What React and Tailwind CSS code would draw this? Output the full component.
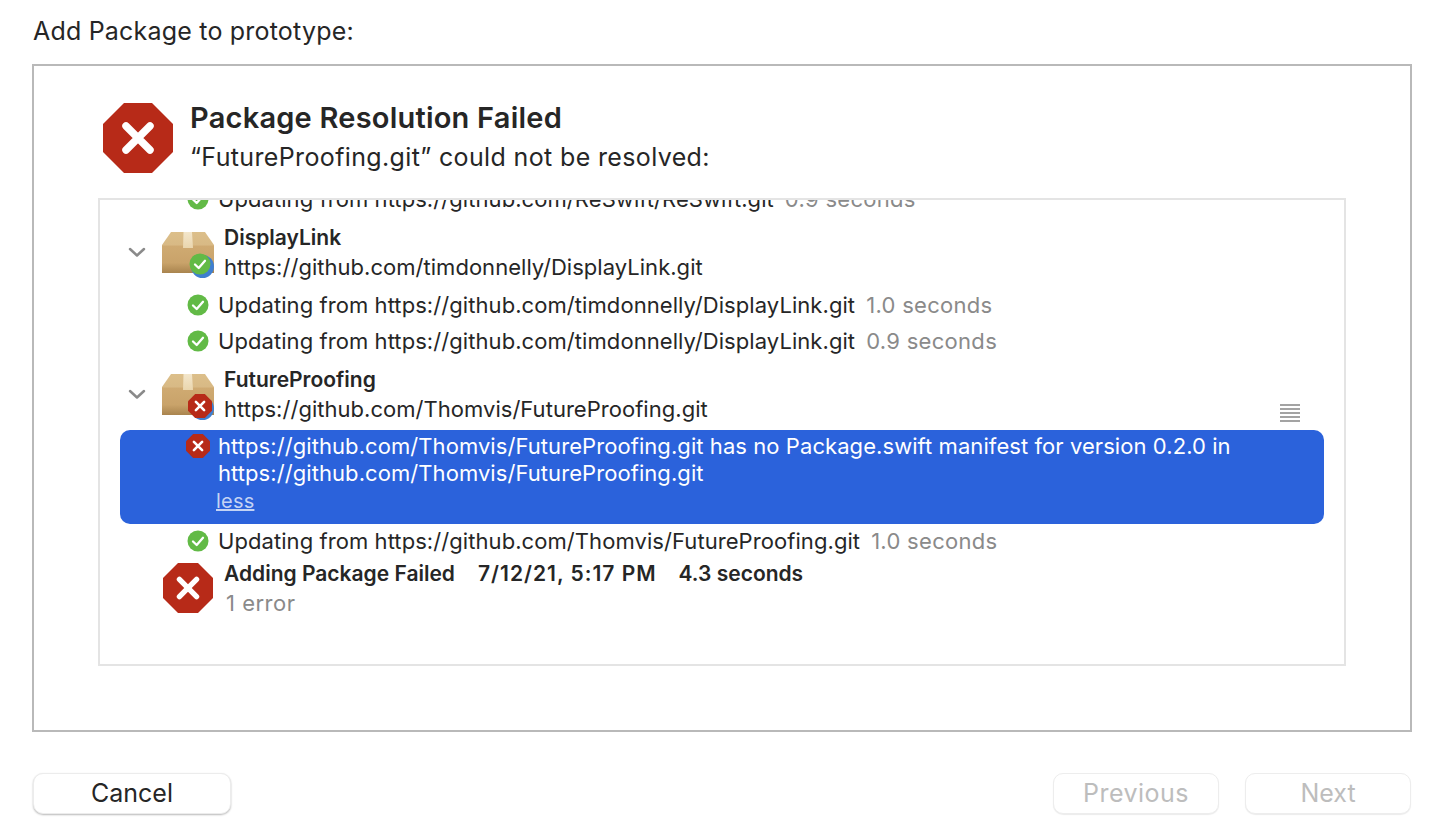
const font = { fontFamily: '"Inter", "Liberation Sans", sans-serif' };

function ErrorOctagon({ size, className = "" }) {
  return (
    <svg width={size} height={size} viewBox="0 0 70 70" className={className}>
      <polygon points="21,0 49,0 70,21 70,49 49,70 21,70 0,49 0,21" fill="#b72a18" />
      <path d="M23 23 L47 47 M47 23 L23 47" stroke="#fff" strokeWidth="7.5" strokeLinecap="round" />
    </svg>
  );
}

function CheckCircle({ size = 22, className = "" }) {
  return (
    <svg width={size} height={size} viewBox="0 0 22 22" className={className}>
      <circle cx="11" cy="11" r="10.5" fill="#62ba46" />
      <path d="M6 11.5 L9.7 15 L16 7.8" fill="none" stroke="#fff" strokeWidth="2.3" strokeLinecap="round" strokeLinejoin="round" />
    </svg>
  );
}

function Box({ id, badge }) {
  return (
    <div className="relative w-[54px] h-[46px] shrink-0 mt-[7px]">
      <svg width="52" height="41" viewBox="0 0 52 41" className="absolute left-0 top-0">
        <defs>
          <linearGradient id={id} x1="0" y1="0" x2="0" y2="1">
            <stop offset="0" stopColor="#dcbf8a" />
            <stop offset="0.32" stopColor="#d8b985" />
            <stop offset="0.34" stopColor="#cfaa72" />
            <stop offset="0.75" stopColor="#c9a36a" />
            <stop offset="1" stopColor="#a9844e" />
          </linearGradient>
          <linearGradient id={`${id}t`} x1="0" y1="0" x2="0" y2="1">
            <stop offset="0" stopColor="#f3e6cb" />
            <stop offset="1" stopColor="#ead6ae" />
          </linearGradient>
        </defs>
        <path d="M9 0 L43 0 L52 13 L52 41 L0 41 L0 13 Z" fill={`url(#${id})`} />
        <path d="M21.5 0 L30 0 L31 16 L21 16 Z" fill={`url(#${id}t)`} />
      </svg>
      <span className="absolute left-[29px] top-[23px] w-[23px] h-[23px] rounded-full bg-[#3f7fd0]" />
      {badge === "ok" ? (
        <CheckCircle size={22} className="absolute left-[27px] top-[21px]" />
      ) : (
        <ErrorOctagon size={24} className="absolute left-[26px] top-[20px]" />
      )}
    </div>
  );
}

function Chevron() {
  return (
    <svg width="18" height="12" viewBox="0 0 18 12" className="shrink-0">
      <path d="M2 3 L9 9.5 L16 3" fill="none" stroke="#8a8a8a" strokeWidth="2.5" strokeLinecap="round" strokeLinejoin="round" />
    </svg>
  );
}

function PackageRow({ id, name, url, badge, className = "" }) {
  return (
    <div className={`flex items-start ${className}`}>
      <div className="w-[62px] pl-[28px] pt-[21px] shrink-0"><Chevron /></div>
      <Box id={id} badge={badge} />
      <div className="ml-[8px] -mt-[2px] flex flex-col">
        <span className="text-[21px] leading-[29px] font-semibold text-[#262626]">{name}</span>
        <span className="text-[22px] leading-[30px] tracking-[0.03px] text-[#262626]">{url}</span>
      </div>
    </div>
  );
}

function StepRow({ url, time, className = "" }) {
  return (
    <div className={`flex items-center h-[36px] pl-[87px] ${className}`}>
      <CheckCircle size={22} />
      <span className="ml-[9px] text-[22px] leading-[30px] tracking-[0.07px] text-[#262626] whitespace-nowrap">Updating from {url}</span>
      <span className="ml-[11px] text-[22px] leading-[30px] tracking-[0.3px] text-[#8a8a8a] whitespace-nowrap">{time}</span>
    </div>
  );
}

export default function App() {
  return (
    <div style={font} className="w-[1434px] h-[836px] bg-white overflow-hidden flex flex-col pl-[32px] pr-[22px] text-[#262626]">
      <div className="h-[64px] pt-[14px] pl-[1px] text-[25px] leading-[34px] tracking-[0.2px] text-[#262626]">Add Package to prototype:</div>

      <div className="h-[668px] border-2 border-[#b9b9b9] flex flex-col pl-[64px] pr-[64px]">
        <div className="h-[132px] flex items-start pt-[37px] pl-[5px]">
          <ErrorOctagon size={70} />
          <div className="ml-[17px] flex flex-col -mt-[3px]">
            <span className="text-[29px] leading-[36px] tracking-[0.22px] font-semibold text-[#262626]">Package Resolution Failed</span>
            <span className="text-[25px] leading-[36px] tracking-[0.36px] text-[#262626] mt-[3px]">“FutureProofing.git” could not be resolved:</span>
          </div>
        </div>

        <div className="relative h-[468px] border-2 border-[#e4e4e4] overflow-hidden">
          <div className="-mt-[19px]">
            <StepRow url="https://github.com/ReSwift/ReSwift.git" time="0.9 seconds" />
            <PackageRow id="a" name="DisplayLink" url="https://github.com/timdonnelly/DisplayLink.git" badge="ok" className="mt-[8px] h-[60px]" />
            <StepRow url="https://github.com/timdonnelly/DisplayLink.git" time="1.0 seconds" className="mt-[2px]" />
            <StepRow url="https://github.com/timdonnelly/DisplayLink.git" time="0.9 seconds" />
            <PackageRow id="b" name="FutureProofing" url="https://github.com/Thomvis/FutureProofing.git" badge="err" className="mt-[8px] h-[63px]" />

            <div className="mx-[20px] h-[94px] rounded-[10px] bg-[#2b62db] text-white relative pl-[98px] pt-[3px]">
              <ErrorOctagon size={24} className="absolute left-[66px] top-[4px]" />
              <div className="text-[22px] leading-[27px] tracking-[0.07px] w-[1060px]">https://github.com/Thomvis/FutureProofing.git has no Package.swift manifest for version 0.2.0 in https://github.com/Thomvis/FutureProofing.git</div>
              <div className="-ml-[2px] mt-[1px] text-[20px] leading-[27px] tracking-[0.2px] underline text-[#c4d3f4]">less</div>
            </div>

            <StepRow url="https://github.com/Thomvis/FutureProofing.git" time="1.0 seconds" className="-mt-[1px]" />
            <div className="flex items-start h-[60px] pl-[63px] mt-[2px]">
              <ErrorOctagon size={50} className="mt-[2px]" />
              <div className="ml-[11px] -mt-[2px] flex flex-col">
                <div className="flex text-[21px] leading-[29px] font-semibold text-[#262626] whitespace-nowrap">
                  <span>Adding Package Failed</span>
                  <span className="ml-[23px] tracking-[1px]">7/12/21, 5:17 PM</span>
                  <span className="ml-[22px]">4.3 seconds</span>
                </div>
                <span className="ml-[2px] text-[22px] leading-[30px] tracking-[0.5px] text-[#8a8a8a]">1 error</span>
              </div>
            </div>
          </div>
          <div className="absolute left-[1180px] top-[204px] w-[20px] flex flex-col gap-[2px]">
            {[0, 1, 2, 3, 4].map((i) => (
              <span key={i} className="h-[2px] bg-[#a3a3a3]" />
            ))}
          </div>
        </div>
      </div>

      <div className="flex items-start justify-between mt-[41px] pl-[1px] pr-[1px]">
        <button className="w-[198px] h-[41px] rounded-[10px] bg-white text-[25px] text-[#262626] border border-[#ececec] shadow-[0_1px_2px_rgba(0,0,0,0.28)]">Cancel</button>
        <div className="flex gap-[26px]">
          <button className="w-[166px] h-[41px] rounded-[10px] bg-white text-[25px] tracking-[0.5px] text-[#bdbdbd] border border-[#ededed] shadow-[0_1px_1px_rgba(0,0,0,0.08)]">Previous</button>
          <button className="w-[166px] h-[41px] rounded-[10px] bg-white text-[25px] text-[#bdbdbd] border border-[#ededed] shadow-[0_1px_1px_rgba(0,0,0,0.08)]">Next</button>
        </div>
      </div>
    </div>
  );
}
